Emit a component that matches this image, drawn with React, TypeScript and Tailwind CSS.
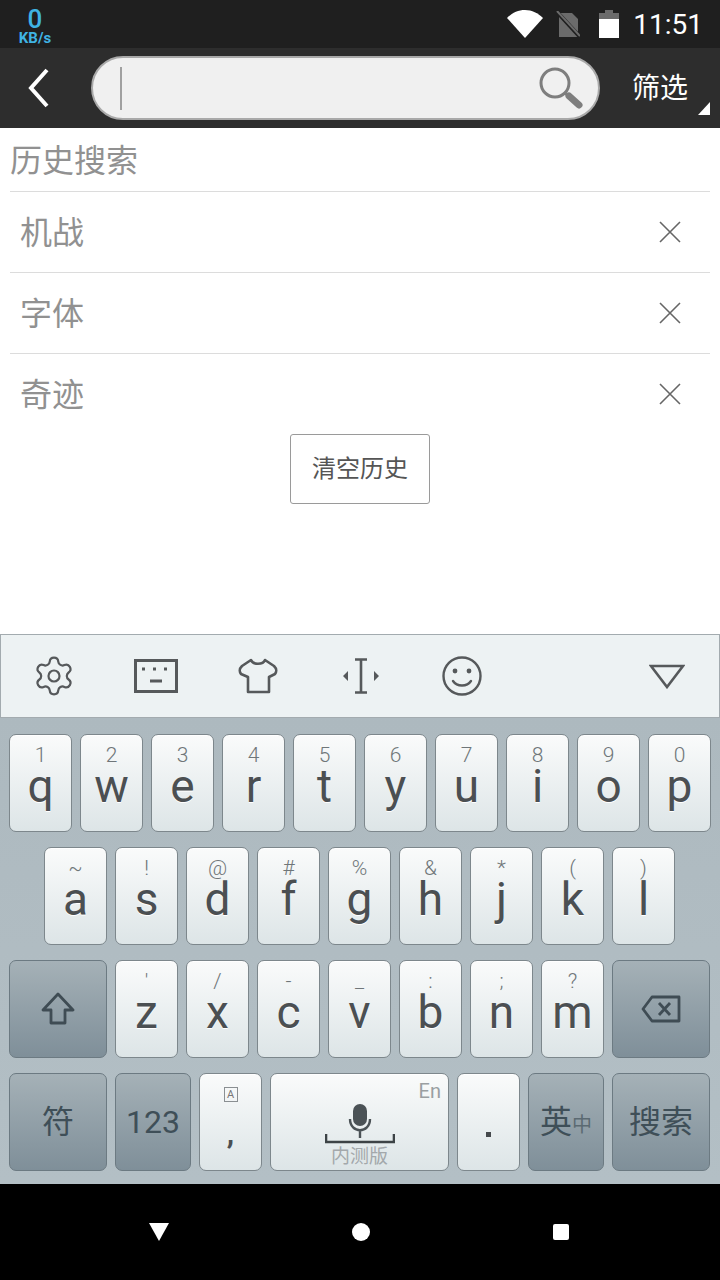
import React from "react";
import { Settings } from "lucide-react";

const cjk = "font-['Roboto','Noto_Sans_CJK_SC',sans-serif]";

const row1 = [
  ["1", "q"], ["2", "w"], ["3", "e"], ["4", "r"], ["5", "t"],
  ["6", "y"], ["7", "u"], ["8", "i"], ["9", "o"], ["0", "p"],
];
const row2 = [
  ["~", "a"], ["!", "s"], ["@", "d"], ["#", "f"], ["%", "g"],
  ["&", "h"], ["*", "j"], ["(", "k"], [")", "l"],
];
const row3 = [
  ["'", "z"], ["/", "x"], ["-", "c"], ["_", "v"], [":", "b"], [";", "n"], ["?", "m"],
];

const lightKey =
  "rounded-[7px] border border-[#7d878c] bg-gradient-to-b from-[#fafbfb] to-[#dde5e7] shadow-[inset_0_1px_0_#fff]";
const darkKey =
  "rounded-[7px] border border-[#6c7a82] bg-gradient-to-b from-[#a5b1b7] to-[#7f8f99] flex items-center justify-center text-[#3f4f58]";

const LetterKey = ({ hint, letter }: { hint: string; letter: string }) => (
  <div className={`w-[63px] h-[98px] flex flex-col items-center ${lightKey}`}>
    <span className="mt-[7px] h-[25px] leading-[26px] text-[21px] font-light text-[#6f7679]">
      {hint}
    </span>
    <span className="text-[46px] leading-[38px] text-[#4b4f52] [text-shadow:0_1px_0_#fff]">
      {letter}
    </span>
  </div>
);

const HistoryRow = ({ text, line = true }: { text: string; line?: boolean }) => (
  <div
    className={`h-[81px] flex items-center justify-between pl-[10px] pr-[29px] ${
      line ? "border-b border-[#dcdcdc]" : "pb-[1px]"
    }`}
  >
    <span className="text-[32px] text-[#919191] mt-[2px]">{text}</span>
    <svg width="22" height="22" viewBox="0 0 22 22" stroke="#666" strokeWidth="1.6" fill="none">
      <path d="M1 1 21 21M21 1 1 21" />
    </svg>
  </div>
);

const StatusBar = () => (
  <div className="h-[48px] bg-[#1f1f1f] flex items-center pl-[18px] pr-[17px]">
    <div className="w-[34px] flex flex-col items-center text-[#3fb4e4] font-bold">
      <span className="text-[26px] leading-[24px] mt-[3px] font-medium">0</span>
      <span className="text-[15px] leading-[14px]">KB/s</span>
    </div>
    <div className="ml-auto flex items-center">
      <svg width="36" height="28" viewBox="0 0 36 28" fill="#fff">
        <path d="M0 8C5 3 11 0 18 0s13 3 18 8L18 28Z" />
      </svg>
      <svg width="24" height="26" viewBox="0 0 24 26" className="ml-[13px]">
        <path d="M3 2h13l6 6v18H3Z" fill="#6b6b6b" />
        <path d="M1 1 24 26" stroke="#1f1f1f" strokeWidth="4" />
        <path d="M1 0 24 25" stroke="#6b6b6b" strokeWidth="2" />
      </svg>
      <svg width="20" height="28" viewBox="0 0 20 28" className="ml-[19px]">
        <path d="M6 0h8v3h6v6H0V3h6Z" fill="#6b6b6b" />
        <path d="M0 9h20v19H0Z" fill="#fff" />
      </svg>
      <span className="ml-[14px] mt-[2px] text-[28px] leading-[28px] text-white">11:51</span>
    </div>
  </div>
);

const SearchBar = () => (
  <div className="relative h-[80px] bg-[#2d2d2d] flex items-center">
    <svg width="24" height="40" viewBox="0 0 24 40" fill="none" stroke="#fff" strokeWidth="4" className="ml-[27px]">
      <path d="M20 2 4 20 20 38" />
    </svg>
    <div className="ml-[40px] w-[509px] h-[64px] rounded-[32px] bg-[#f0f0f0] border-2 border-[#a9a9a9] flex items-center justify-between pl-[27px] pr-[15px]">
      <div className="w-[2px] h-[43px] bg-[#a0a0a0]" />
      <svg width="44" height="42" viewBox="0 0 44 42" fill="none">
        <circle cx="16" cy="16" r="14" stroke="#7e7e7e" strokeWidth="3" />
        <path d="M26 26 31 30" stroke="#7e7e7e" strokeWidth="3" />
        <path d="M30 29 40 38" stroke="#7e7e7e" strokeWidth="7" strokeLinecap="round" />
      </svg>
    </div>
    <span className={`ml-[32px] mt-[2px] text-[28px] text-white ${cjk}`}>筛选</span>
    <svg width="12" height="13" viewBox="0 0 12 13" fill="#fff" className="absolute left-[698px] top-[54px]">
      <path d="M12 0V13H0Z" />
    </svg>
  </div>
);

const KeyboardBar = () => (
  <div className="h-[84px] bg-[#edf2f3] border border-[#a3abaf] flex items-center pl-[2px] text-[#56595b]">
    <div className="w-[102px] flex justify-center">
      <Settings size={44} strokeWidth={1.2} />
    </div>
    <div className="w-[102px] flex justify-center">
      <svg width="44" height="34" viewBox="0 0 44 34" fill="none" stroke="currentColor">
        <rect x="1.5" y="1.5" width="41" height="31" strokeWidth="3" />
        <path d="M8 10h3M19 10h3M30 10h3" strokeWidth="3" />
        <path d="M16 22h12" strokeWidth="3" />
      </svg>
    </div>
    <div className="w-[102px] flex justify-center">
      <svg width="40" height="36" viewBox="0 0 40 36" fill="none" stroke="currentColor" strokeWidth="2.6" strokeLinejoin="round">
        <path d="M13 2C15 7 25 7 27 2L36 8C39 11 39 13 37 16L31 19V34H10V19L3 16C1 13 1 11 4 8Z" />
      </svg>
    </div>
    <div className="w-[102px] flex justify-center pl-[2px]">
      <svg width="36" height="36" viewBox="0 0 36 36" fill="currentColor">
        <path d="M12 1.5H24M12 34.5H24M18 2V34" stroke="currentColor" strokeWidth="2.6" fill="none" />
        <path d="M5 13V23L0 18ZM31 13V23L36 18Z" />
      </svg>
    </div>
    <div className="w-[102px] flex justify-center">
      <svg width="40" height="40" viewBox="0 0 40 40" fill="none" stroke="currentColor" strokeWidth="2.4">
        <circle cx="20" cy="20" r="18.5" />
        <circle cx="13" cy="15" r="2.4" fill="currentColor" stroke="none" />
        <circle cx="27" cy="15" r="2.4" fill="currentColor" stroke="none" />
        <path d="M11 25C15 31 25 31 29 25" strokeLinecap="round" />
      </svg>
    </div>
    <svg width="36" height="25" viewBox="0 0 36 25" fill="none" stroke="currentColor" strokeWidth="2.6" className="ml-auto mr-[34px]">
      <path d="M2 2H34L18 23Z" />
    </svg>
  </div>
);

const Keyboard = () => (
  <div className="h-[466px] bg-gradient-to-b from-[#adb9bf] to-[#b3bfc5] pt-[16px] pl-[9px] flex flex-col gap-[15px]">
    <div className="flex gap-2">
      {row1.map(([h, l]) => (
        <LetterKey key={l} hint={h} letter={l} />
      ))}
    </div>
    <div className="flex gap-2 pl-[35px]">
      {row2.map(([h, l]) => (
        <LetterKey key={l} hint={h} letter={l} />
      ))}
    </div>
    <div className="flex gap-2">
      <div className={`w-[98px] h-[98px] ${darkKey}`}>
        <svg width="34" height="34" viewBox="0 0 34 34" fill="none" stroke="#3f4c54" strokeWidth="2.8" strokeLinejoin="round">
          <path d="M17 2 32 18H24V31H10V18H2Z" />
        </svg>
      </div>
      {row3.map(([h, l]) => (
        <LetterKey key={l} hint={h} letter={l} />
      ))}
      <div className={`w-[98px] h-[98px] ${darkKey}`}>
        <svg width="40" height="28" viewBox="0 0 40 28" fill="none" stroke="#3f4c54" strokeWidth="2.8" strokeLinejoin="round">
          <path d="M11 2H38V26H11L2 14Z" />
          <path d="M18 8 29 20M29 8 18 20" />
        </svg>
      </div>
    </div>
    <div className={`flex gap-2 ${cjk}`}>
      <div className={`w-[98px] h-[98px] text-[32px] ${darkKey}`}>符</div>
      <div className={`w-[76px] h-[98px] text-[32px] ${darkKey}`}>123</div>
      <div className={`w-[63px] h-[98px] flex flex-col items-center ${lightKey}`}>
        <span className="mt-[13px] w-[14px] h-[15px] border border-[#8a8f92] text-[11px] leading-[13px] text-center text-[#777]">
          A
        </span>
        <span className="mt-[14px] text-[30px] leading-[36px] font-bold text-[#4b4f52]">,</span>
      </div>
      <div className={`relative w-[179px] h-[98px] flex flex-col items-center ${lightKey}`}>
        <span className="absolute right-[7px] top-[2px] text-[20px] text-[#9a9fa2]">En</span>
        <svg width="70" height="40" viewBox="0 0 70 40" fill="none" className="mt-[30px]">
          <rect x="28" y="0" width="14" height="22" rx="7" fill="#4b5256" />
          <path d="M25 15C25 30 45 30 45 15M35 26V34" stroke="#4b5256" strokeWidth="2.4" />
          <path d="M1 30V38H69V30" stroke="#3d4346" strokeWidth="2.6" />
        </svg>
        <span className="text-[19px] leading-[24px] mt-[1px] text-[#a3a8ab]">内测版</span>
      </div>
      <div className={`w-[63px] h-[98px] flex flex-col items-center ${lightKey}`}>
        <span className="mt-[58px] w-[5px] h-[5px] bg-[#45494c]" />
      </div>
      <div className={`w-[76px] h-[98px] ${darkKey}`}>
        <span className="text-[32px]">英</span>
        <span className="text-[20px] mt-[6px] text-[#5b6a72]">中</span>
      </div>
      <div className={`w-[98px] h-[98px] text-[32px] ${darkKey}`}>搜索</div>
    </div>
  </div>
);

const NavBar = () => (
  <div className="h-[96px] bg-black relative flex items-center">
    <svg width="20" height="18" viewBox="0 0 20 18" fill="#fff" className="ml-[149px]">
      <path d="M0 0H20L10 18Z" />
    </svg>
    <div className="ml-[183px] w-[18px] h-[18px] rounded-full bg-white" />
    <div className="ml-[183px] w-[16px] h-[16px] rounded-[2px] bg-white" />
  </div>
);

export default function App() {
  return (
    <div className={`w-[720px] h-[1280px] flex flex-col bg-white overflow-hidden ${cjk}`}>
      <StatusBar />
      <SearchBar />
      <div className="h-[506px] px-[10px]">
        <div className="h-[64px] flex items-center border-b border-[#dcdcdc] text-[32px] text-[#919191]">
          <span className="mt-[2px]">历史搜索</span>
        </div>
        <HistoryRow text="机战" />
        <HistoryRow text="字体" />
        <HistoryRow text="奇迹" line={false} />
        <div className="flex justify-center -mt-[1px]">
          <button className="w-[140px] h-[70px] border border-[#9a9a9a] rounded-[3px] text-[24px] text-[#555]">
            清空历史
          </button>
        </div>
      </div>
      <KeyboardBar />
      <Keyboard />
      <NavBar />
    </div>
  );
}
